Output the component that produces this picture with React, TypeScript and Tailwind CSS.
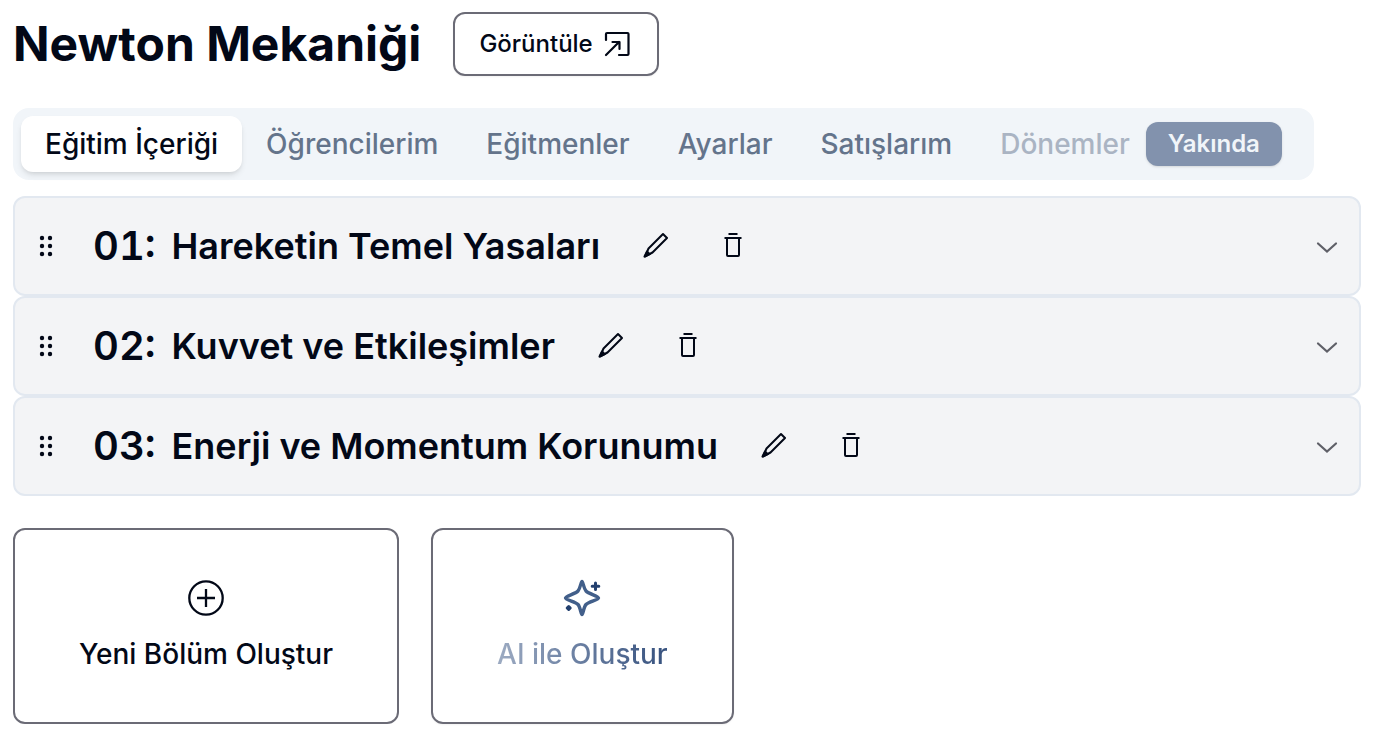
import { useState } from 'react'

const TABS = ['Eğitim İçeriği', 'Öğrencilerim', 'Eğitmenler', 'Ayarlar', 'Satışlarım']

const SECTIONS = [
  { no: '01', title: 'Hareketin Temel Yasaları' },
  { no: '02', title: 'Kuvvet ve Etkileşimler' },
  { no: '03', title: 'Enerji ve Momentum Korunumu' },
]

function OpenIcon() {
  return (
    <svg className="size-8" viewBox="0 0 32 32" fill="none" stroke="currentColor" strokeWidth="2.2" strokeLinecap="round" strokeLinejoin="round" aria-hidden="true">
      <path d="M5 12V6a1 1 0 0 1 1-1h20.500a1 1 0 0 1 1 1v20a1 1 0 0 1-1 1H18" />
      <path d="M5 27 18 14M11.500 14H18.500v7" />
    </svg>
  )
}

function DragIcon() {
  return (
    <svg className="size-8" viewBox="0 0 32 32" fill="currentColor" aria-hidden="true">
      {[8, 16, 24].map(y => (
        <g key={y}>
          <circle cx="13" cy={y} r="2.2" />
          <circle cx="21" cy={y} r="2.2" />
        </g>
      ))}
    </svg>
  )
}

function PencilIcon() {
  return (
    <svg className="size-8" viewBox="0 0 32 32" fill="none" stroke="currentColor" strokeWidth="2" strokeLinejoin="round" aria-hidden="true">
      <path d="M23 4 27 8 12.500 22.500 5 26.500 8.500 18.500Z" />
      <path d="M4.500 26.500 7 21.500 9.800 24.200Z" fill="currentColor" />
    </svg>
  )
}

function TrashIcon() {
  return (
    <svg className="size-8" viewBox="0 0 32 32" fill="none" stroke="currentColor" strokeWidth="2" aria-hidden="true">
      <path d="M12.500 4h9M8.500 8h17" />
      <path d="M11 8v17a1 1 0 0 0 1 1h10a1 1 0 0 0 1-1V8" />
    </svg>
  )
}

function ChevronIcon() {
  return (
    <svg className="size-8" viewBox="0 0 32 32" fill="none" stroke="currentColor" strokeWidth="2.2" strokeLinecap="round" aria-hidden="true">
      <path d="m7 13.500 9 8 9-8" />
    </svg>
  )
}

function PlusIcon() {
  return (
    <svg className="size-10" viewBox="0 0 40 40" fill="none" stroke="currentColor" strokeWidth="2.300" aria-hidden="true">
      <circle cx="20" cy="21" r="16.700" />
      <path d="M11 21h18M20 12v18" />
    </svg>
  )
}

function SparklesIcon() {
  return (
    <svg className="size-10" viewBox="0 0 40 40" fill="none" stroke="#425f8a" strokeWidth="3.400" strokeLinejoin="round" strokeLinecap="round" aria-hidden="true">
      <path d="M20 4.500c1 0 1.700 7 4 9.500 2.700 3 12.500 5 12.500 7s-9.800 3.500-12.500 6.500c-2.300 2.500-3 10-4 10s-1.700-7.500-4-10C13.300 24.500 3.500 23 3.500 21s9.800-4 12.500-7c2.300-2.500 3-9.500 4-9.500Z" />
      <path d="M33.500 6v6.500M30.200 9.200h6.600" stroke="#23406f" strokeWidth="3" />
      <path d="m6.700 29.500 1.500 1.500-1.500 1.500L5.200 31Z" stroke="#23406f" strokeWidth="3" fill="#23406f" />
    </svg>
  )
}

export default function App() {
  const [tab, setTab] = useState(TABS[0])

  return (
    <main className="bg-white pt-3 pr-[19px] pb-4 pl-[13px] font-[Inter,sans-serif] text-[#020817]">
      <header className="flex items-center gap-8">
        <h1 className="text-5xl font-bold">Newton Mekaniği</h1>
        <button className="flex h-16 items-center gap-2 rounded-xl border-2 border-[#6b6b76] px-6 text-2xl font-medium shadow-xs">
          Görüntüle
          <OpenIcon />
        </button>
      </header>

      <div role="tablist" className="mt-8 inline-flex h-18 items-center rounded-2xl bg-[#f1f5f9] p-2 align-top text-[28px] font-medium text-[#64748b]">
        {TABS.map(t => (
          <button
            key={t}
            role="tab"
            aria-selected={t === tab}
            onClick={() => setTab(t)}
            className={`h-14 rounded-xl px-6 whitespace-nowrap ${t === tab ? 'bg-white text-[#020817] shadow-md' : ''}`}
          >
            {t}
          </button>
        ))}
        <button role="tab" aria-selected={false} disabled className="flex h-14 items-center gap-4 px-6 text-[#aab4c3]">
          Dönemler
          <span className="flex h-11 items-center rounded-xl bg-[#8292ad] px-[22px] text-2xl font-semibold text-[#f1f5f9] shadow-sm">Yakında</span>
        </button>
      </div>

      <section className="mt-4">
        {SECTIONS.map(s => (
          <div key={s.no} className="flex h-25 items-center rounded-xl border-2 border-[#e2e8f0] bg-[#f3f4f6] pr-4 pl-3.5">
            <button aria-label="Sürükle">
              <DragIcon />
            </button>
            <h2 className="ml-8 flex items-center gap-4 font-semibold whitespace-nowrap">
              <span className="text-[40px] tabular-nums">{s.no}:</span>
              <span className="text-4xl">{s.title}</span>
            </h2>
            <button aria-label="Düzenle" className="ml-10">
              <PencilIcon />
            </button>
            <button aria-label="Sil" className="ml-11">
              <TrashIcon />
            </button>
            <button aria-label="Bölümü aç" className="ml-auto text-[#5f6068]">
              <ChevronIcon />
            </button>
          </div>
        ))}
      </section>

      <div className="mt-8 flex gap-8 text-[28px] font-medium">
        <button className="flex h-49 flex-col items-center justify-center gap-4 rounded-xl border-2 border-[#6b6b76] px-16">
          <PlusIcon />
          Yeni Bölüm Oluştur
        </button>
        <button className="flex h-49 flex-col items-center justify-center gap-4 rounded-xl border-2 border-[#6b6b76] px-16 shadow-xs">
          <SparklesIcon />
          <span className="bg-linear-to-r from-[#9dabc2] to-[#36517e] bg-clip-text text-transparent">AI ile Oluştur</span>
        </button>
      </div>
    </main>
  )
}
